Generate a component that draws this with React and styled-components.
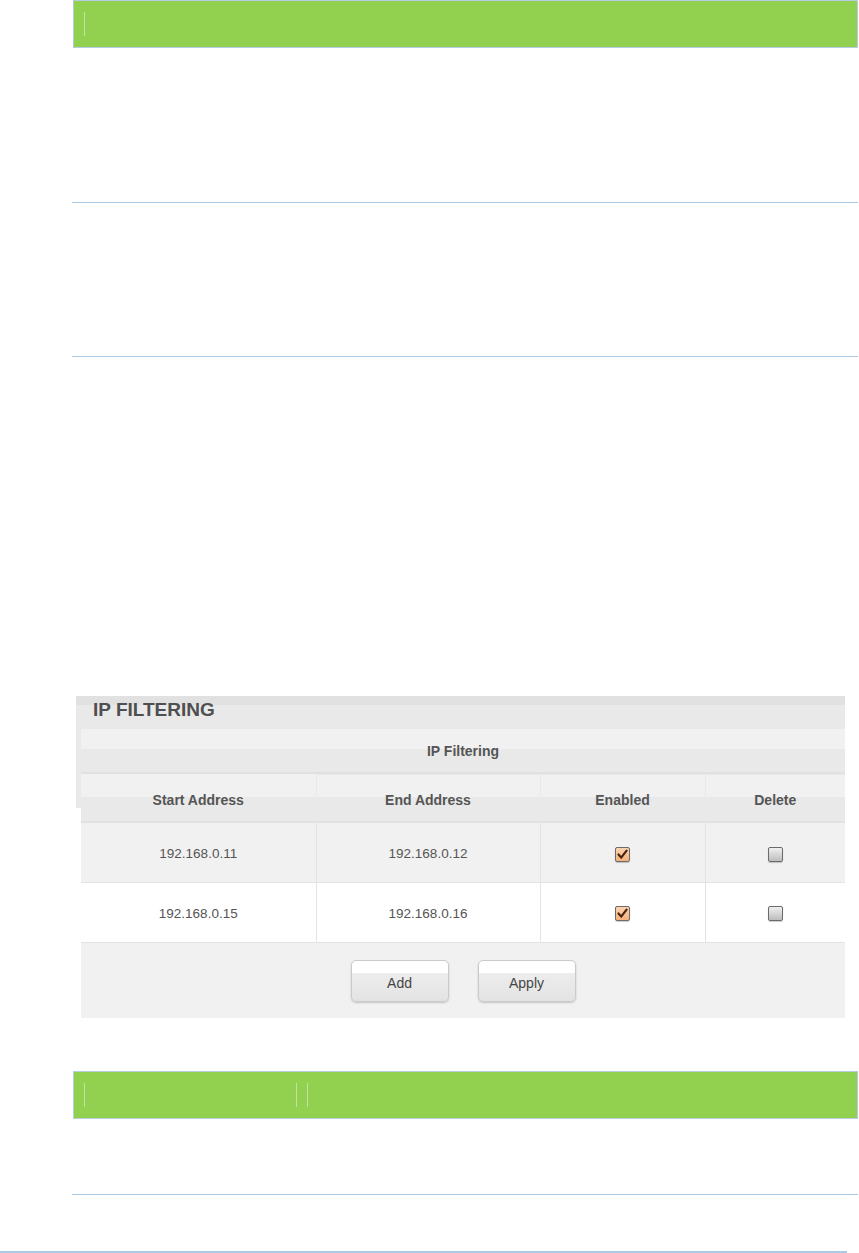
import React from "react";
import styled, { createGlobalStyle } from "styled-components";

const COLORS = {
  green: "#92d150",
  barBorder: "#b7cbe4",
  rule: "#a9cbe8",
  text: "#555555",
  strip: "#e1e1e1",
  panel: "#e9e9e9",
  light: "#f1f1f1",
  cellLine: "#e3e3e3",
};

const GlobalStyle = createGlobalStyle`
  html, body {
    margin: 0;
    padding: 0;
    background: #ffffff;
    font-family: "Liberation Sans", Arial, sans-serif;
  }
`;

const RULES = [
  { start: "192.168.0.11", end: "192.168.0.12", enabled: true, remove: false },
  { start: "192.168.0.15", end: "192.168.0.16", enabled: true, remove: false },
];

const COLUMNS = [
  { label: "Start Address", width: 235 },
  { label: "End Address", width: 224 },
  { label: "Enabled", width: 165 },
  { label: "Delete", width: 140 },
];

const Check = ({ checked }) => (
  <Box $checked={checked}>
    {checked && (
      <svg width="11" height="11" viewBox="0 0 11 11">
        <path
          d="M1.5 5.5 L4.2 8.6 L9.6 1.6"
          fill="none"
          stroke="#4a2412"
          strokeWidth="2.2"
          strokeLinecap="round"
          strokeLinejoin="round"
        />
      </svg>
    )}
  </Box>
);

const App = () => {
  return (
    <Page>
      <GlobalStyle />
      <Content>
        <TabBar>
          <Tab />
        </TabBar>
        <Panel $height={154} />
        <Panel $height={153} />

        <Card>
          <Title>IP FILTERING</Title>
          <Table>
            <colgroup>
              {COLUMNS.map((c) => (
                <col key={c.label} style={{ width: c.width }} />
              ))}
            </colgroup>
            <tbody>
              <tr>
                <Caption colSpan={4}>IP Filtering</Caption>
              </tr>
              <tr>
                {COLUMNS.map((c) => (
                  <HeadCell key={c.label}>{c.label}</HeadCell>
                ))}
              </tr>
              {RULES.map((r, i) => (
                <tr key={r.start}>
                  <Cell $odd={i % 2 === 0}>{r.start}</Cell>
                  <Cell $odd={i % 2 === 0}>{r.end}</Cell>
                  <Cell $odd={i % 2 === 0}>
                    <Check checked={r.enabled} />
                  </Cell>
                  <Cell $odd={i % 2 === 0}>
                    <Check checked={r.remove} />
                  </Cell>
                </tr>
              ))}
              <tr>
                <Footer colSpan={4}>
                  <Buttons>
                    <Button>Add</Button>
                    <Button>Apply</Button>
                  </Buttons>
                </Footer>
              </tr>
            </tbody>
          </Table>
        </Card>

        <TabBar $gap={53}>
          <Tab $width={211} $closed />
          <Tab />
        </TabBar>
        <Panel $height={75} />
      </Content>
      <BottomRule />
    </Page>
  );
};

const Page = styled.div`
  width: 859px;
`;

const Content = styled.div`
  padding-left: 73px;
  width: 785px;
`;

const TabBar = styled.div`
  display: flex;
  height: 46px;
  margin-top: ${(p) => (p.$gap || 0) + "px"};
  background: ${COLORS.green};
  border: 1px solid ${COLORS.barBorder};
`;

const Tab = styled.div`
  width: ${(p) => (p.$width ? p.$width + "px" : "auto")};
  height: 24px;
  margin: 11px 0 0 10px;
  border-left: 1px solid #c3e3a2;
  border-right: ${(p) => (p.$closed ? "1px solid #c3e3a2" : "none")};
`;

const Panel = styled.div`
  height: ${(p) => p.$height}px;
  margin-left: -1px;
  border-bottom: 1px solid ${COLORS.rule};
`;

const Card = styled.div`
  margin: 339px 0 0 3px;
  width: 769px;
  background:
    linear-gradient(${COLORS.strip}, ${COLORS.strip}) top / 100% 9px no-repeat,
    linear-gradient(${COLORS.panel}, ${COLORS.panel}) top / 100% 112px no-repeat;
`;

const Title = styled.h2`
  margin: 0;
  padding: 2px 0 7px 17px;
  height: 24px;
  font-size: 19px;
  line-height: 24px;
  font-weight: bold;
  color: #4f4f4f;
`;

const Table = styled.table`
  margin-left: 5px;
  width: 764px;
  table-layout: fixed;
  border-collapse: collapse;
  color: ${COLORS.text};
`;

const Caption = styled.td`
  height: 43px;
  padding: 0;
  text-align: center;
  font-size: 14px;
  font-weight: bold;
  background: linear-gradient(${COLORS.light} 20px, ${COLORS.panel} 20px);
  border-bottom: 2px solid ${COLORS.strip};
`;

const HeadCell = styled.td`
  height: 49px;
  padding: 4px 0 0;
  box-sizing: border-box;
  text-align: center;
  font-size: 14px;
  font-weight: bold;
  background: linear-gradient(${COLORS.light} 23px, ${COLORS.panel} 23px);
  border-left: 1px solid ${COLORS.panel};
  border-bottom: 2px solid ${COLORS.strip};

  &:first-child {
    border-left: none;
  }
`;

const Cell = styled.td`
  height: 60px;
  padding: 3px 0 0;
  box-sizing: border-box;
  text-align: center;
  font-size: 13.5px;
  background: ${(p) => (p.$odd ? COLORS.light : "#ffffff")};
  border-left: 1px solid ${COLORS.cellLine};
  border-bottom: 1px solid ${COLORS.cellLine};

  &:first-child {
    border-left: none;
  }
`;

const Box = styled.span`
  display: inline-flex;
  align-items: center;
  justify-content: center;
  width: 13px;
  height: 13px;
  border: 1px solid #6b6b6b;
  border-radius: 2px;
  vertical-align: middle;
  box-shadow: 0 1px 1px rgba(0, 0, 0, 0.2);
  background: ${(p) =>
    p.$checked
      ? "linear-gradient(#fbd3b0, #f6b07a)"
      : "linear-gradient(#f0f0f0, #bdbdbd)"};
`;

const Footer = styled.td`
  height: 75px;
  padding: 0;
  vertical-align: top;
  background: ${COLORS.light};
`;

const Buttons = styled.div`
  display: flex;
  justify-content: center;
  gap: 29px;
  padding-top: 17px;
`;

const Button = styled.button`
  width: 98px;
  height: 42px;
  padding: 4px 0 0;
  font-family: "Liberation Sans", Arial, sans-serif;
  font-size: 14px;
  color: #454545;
  border: 1px solid #cacaca;
  border-radius: 5px;
  background: linear-gradient(#ffffff 12px, #ededed 12px, #e3e3e3 100%);
  box-shadow: 0 1px 2px rgba(0, 0, 0, 0.18);
  cursor: pointer;
`;

const BottomRule = styled.div`
  width: 847px;
  margin-top: 56px;
  height: 2px;
  background: ${COLORS.rule};
`;

export default App;
